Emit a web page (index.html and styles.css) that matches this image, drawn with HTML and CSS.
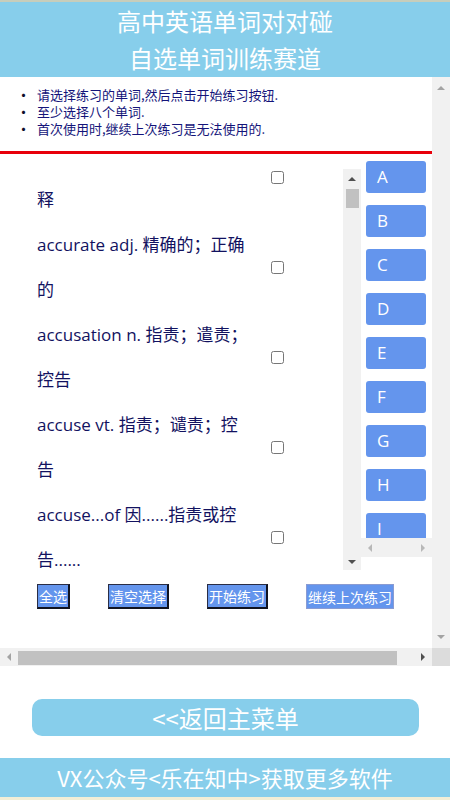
FILE: index.html
```html
<!DOCTYPE html>
<html lang="zh-CN">
<head>
<meta charset="utf-8">
<title>自选单词训练赛道</title>
<link rel="stylesheet" href="styles.css">
</head>
<body>
<header class="top">
  <div class="title">高中英语单词对对碰</div>
  <div class="title">自选单词训练赛道</div>
</header>

<div class="frame">
  <div class="viewport">
    <ul class="tips">
      <li>请选择练习的单词,然后点击开始练习按钮.</li>
      <li>至少选择八个单词.</li>
      <li>首次使用时,继续上次练习是无法使用的.</li>
    </ul>
    <div class="rule"></div>

    <div class="picker">
      <div class="words">
        <div class="rows">
          <div class="row"><div class="word">account n. 账户；叙述；解<br>释</div><div class="check"><input type="checkbox"></div></div>
          <div class="row"><div class="word">accurate adj. 精确的；正确<br>的</div><div class="check"><input type="checkbox"></div></div>
          <div class="row"><div class="word">accusation n. 指责；遣责；<br>控告</div><div class="check"><input type="checkbox"></div></div>
          <div class="row"><div class="word">accuse vt. 指责；谴责；控<br>告</div><div class="check"><input type="checkbox"></div></div>
          <div class="row"><div class="word">accuse...of 因......指责或控<br>告......</div><div class="check"><input type="checkbox"></div></div>
        </div>
      </div>
      <div class="vbar inner">
        <span class="arr up dark"></span>
        <span class="thumb-v"></span>
        <span class="spacer"></span>
        <span class="arr down dark"></span>
      </div>
      <div class="letters">
        <div class="letter-list">
          <div class="letter">A</div>
          <div class="letter">B</div>
          <div class="letter">C</div>
          <div class="letter">D</div>
          <div class="letter">E</div>
          <div class="letter">F</div>
          <div class="letter">G</div>
          <div class="letter">H</div>
          <div class="letter">I</div>
        </div>
        <div class="hbar small">
          <span class="arr left light"></span>
          <span class="arr right light"></span>
        </div>
      </div>
    </div>

    <div class="actions">
      <button class="act">全选</button>
      <button class="act">清空选择</button>
      <button class="act">开始练习</button>
      <button class="act disabled">继续上次练习</button>
    </div>
  </div>

  <div class="vbar outer">
    <span class="arr up grey"></span>
    <span class="spacer"></span>
    <span class="arr down grey"></span>
  </div>

  <div class="hbar outer">
    <span class="hcap"><span class="arr left grey"></span></span>
    <span class="thumb-h"></span>
    <span class="spacer"></span>
    <span class="hcap"><span class="arr right dark"></span></span>
  </div>
  <div class="corner"></div>
</div>

<div class="back-wrap">
  <div class="back">&lt;&lt;返回主菜单</div>
</div>

<footer class="foot">VX公众号&lt;乐在知中&gt;获取更多软件</footer>
</body>
</html>
```

FILE: styles.css
```css
* { box-sizing: border-box; }

body {
  margin: 0;
  width: 450px;
  background: #ffffff;
  font-family: "Noto Sans CJK SC", "Noto Sans", sans-serif;
}

.top {
  height: 77px;
  background: #87ceeb;
  border-top: 2px solid #c7cdbb;
  color: #ffffff;
  text-align: center;
}

.title {
  font-size: 24px;
  line-height: 37px;
}

.frame {
  display: grid;
  grid-template-columns: 432px 18px;
  grid-template-rows: 571px 18px;
}

.viewport {
  overflow: hidden;
  background: #ffffff;
}

.tips {
  list-style: none;
  margin: 0;
  padding: 9px 0 0 16px;
  font-size: 13px;
  line-height: 17px;
  color: #14147a;
}

.tips li {
  height: 17px;
  white-space: nowrap;
}

.tips li::before {
  content: "•";
  display: inline-block;
  width: 21px;
  font-size: 15px;
  line-height: 17px;
  vertical-align: top;
  color: #0d0d2a;
}

.rule {
  height: 3px;
  margin-top: 14px;
  background: #e8000b;
}

.picker {
  display: flex;
  align-items: flex-start;
}

.words {
  width: 343px;
  height: 401px;
  margin-top: 15px;
  overflow: hidden;
}

.rows {
  margin-top: -37px;
}

.row {
  display: flex;
  align-items: center;
  height: 90px;
}

.word {
  width: 255px;
  padding-left: 37px;
  white-space: nowrap;
  font-family: "Open Sans", "Noto Sans CJK SC", sans-serif;
  font-size: 17px;
  line-height: 45px;
  color: #12125f;
}

.check {
  padding-left: 16px;
  display: flex;
}

.check input {
  margin: 0;
  width: 13px;
  height: 13px;
}

.vbar {
  display: flex;
  flex-direction: column;
  align-items: center;
  background: #f1f1f1;
}

.vbar.inner {
  width: 18px;
  height: 401px;
  margin-top: 15px;
  padding: 8px 0 6px;
}

.vbar.outer {
  padding: 9px 0 9px;
}

.spacer { flex: 1; }

.thumb-v {
  width: 13px;
  height: 19px;
  margin-top: 8px;
  background: #c1c1c1;
}

.arr {
  display: block;
  width: 0;
  height: 0;
}

.arr.up {
  border-left: 4px solid transparent;
  border-right: 4px solid transparent;
  border-bottom: 4px solid #505050;
}

.arr.down {
  border-left: 4px solid transparent;
  border-right: 4px solid transparent;
  border-top: 4px solid #505050;
}

.arr.left {
  border-top: 4px solid transparent;
  border-bottom: 4px solid transparent;
  border-right: 4px solid #505050;
}

.arr.right {
  border-top: 4px solid transparent;
  border-bottom: 4px solid transparent;
  border-left: 4px solid #505050;
}

.arr.up.grey { border-bottom-color: #a3a3a3; }
.arr.down.grey { border-top-color: #a3a3a3; }
.arr.left.grey { border-right-color: #a3a3a3; }
.arr.left.light { border-right-color: #b8b8b8; }
.arr.right.light { border-left-color: #b8b8b8; }

.letters {
  width: 71px;
  display: flex;
  flex-direction: column;
}

.letter-list {
  height: 384px;
  overflow: hidden;
  padding: 7px 5px 0 5px;
  display: flex;
  flex-direction: column;
  gap: 12px;
}

.letter {
  flex: none;
  width: 60px;
  height: 32px;
  padding-left: 11px;
  border-radius: 3px;
  background: #6495ed;
  color: #ffffff;
  font-family: "Open Sans", sans-serif;
  font-size: 17px;
  line-height: 32px;
}

.hbar {
  display: flex;
  align-items: center;
  background: #f1f1f1;
}

.hbar.small {
  height: 19px;
  justify-content: space-between;
  padding: 0 7px;
}

.hcap {
  width: 18px;
  display: flex;
  justify-content: center;
}

.thumb-h {
  width: 379px;
  height: 14px;
  margin-top: 2px;
  background: #c1c1c1;
}

.corner {
  background: #dcdcdc;
}

.actions {
  display: flex;
  gap: 38px;
  padding-left: 37px;
  margin-top: 14px;
}

.act {
  margin: 0;
  padding: 2px 1px;
  border-style: solid;
  border-width: 1px 2px 2px 1px;
  border-color: #2a2d44 #11131f #11131f #2a2d44;
  background: #6495ed;
  color: #ffffff;
  font-family: "Noto Sans CJK SC", sans-serif;
  font-size: 14px;
  line-height: 18px;
  border-radius: 0;
}

.act.disabled {
  border-width: 1px;
  border-color: #8a9bd2;
}

.back-wrap {
  padding: 33px 31px 0 32px;
}

.back {
  height: 37px;
  border-radius: 10px;
  background: #87ceeb;
  color: #ffffff;
  text-align: center;
  font-size: 24px;
  line-height: 37px;
}

.foot {
  margin-top: 22px;
  height: 42px;
  background: #87ceeb;
  border-bottom: 3px solid #f2eed6;
  color: #ffffff;
  text-align: center;
  font-size: 22px;
  line-height: 39px;
}
```
